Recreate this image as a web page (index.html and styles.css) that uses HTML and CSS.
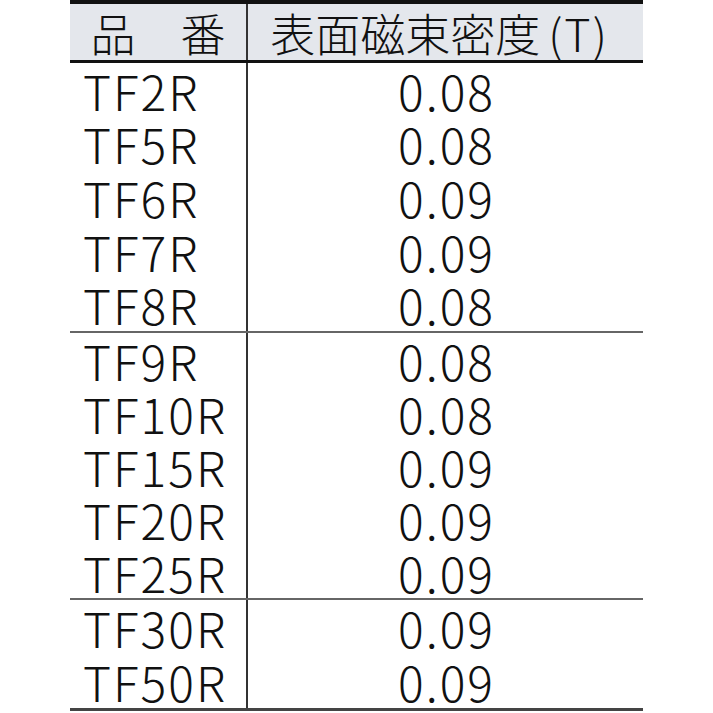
FILE: index.html
```html
<!DOCTYPE html>
<html lang="ja">
<head>
<meta charset="utf-8">
<link rel="stylesheet" href="styles.css">
</head>
<body>
<div class="table">
  <div class="head">
    <div class="hcell c1">品　番</div>
    <div class="hcell c2">表面磁束密度<span class="paren">(T)</span></div>
  </div>
  <div class="group g1">
    <div class="row"><div class="name">TF2R</div><div class="val">0.08</div></div>
    <div class="row"><div class="name">TF5R</div><div class="val">0.08</div></div>
    <div class="row"><div class="name">TF6R</div><div class="val">0.09</div></div>
    <div class="row"><div class="name">TF7R</div><div class="val">0.09</div></div>
    <div class="row"><div class="name">TF8R</div><div class="val">0.08</div></div>
  </div>
  <div class="group g2">
    <div class="row"><div class="name">TF9R</div><div class="val">0.08</div></div>
    <div class="row"><div class="name">TF10R</div><div class="val">0.08</div></div>
    <div class="row"><div class="name">TF15R</div><div class="val">0.09</div></div>
    <div class="row"><div class="name">TF20R</div><div class="val">0.09</div></div>
    <div class="row"><div class="name">TF25R</div><div class="val">0.09</div></div>
  </div>
  <div class="group g3">
    <div class="row"><div class="name">TF30R</div><div class="val">0.09</div></div>
    <div class="row"><div class="name">TF50R</div><div class="val">0.09</div></div>
  </div>
</div>
</body>
</html>
```
FILE: styles.css
```css
html, body {
  margin: 0;
  padding: 0;
  background: #ffffff;
}
body {
  font-family: "Noto Sans CJK JP", "Noto Sans", sans-serif;
  font-weight: 300;
  color: #111111;
}
.table {
  margin-left: 70px;
  width: 573px;
  display: flex;
  flex-direction: column;
}
.head {
  display: grid;
  grid-template-columns: 178px 1fr;
  height: 56px;
  background: #e4e7ec;
  border-top: 4px solid #111111;
  border-bottom: 3px solid #111111;
}
.hcell {
  display: flex;
  align-items: center;
  justify-content: center;
  font-size: 45px;
  line-height: 1;
}
.hcell.c1 {
  border-right: 2px solid #333333;
}
.hcell.c2 {
  padding-right: 12px;
}
.paren {
  margin-left: 8px;
  letter-spacing: 2px;
}
.group {
  display: flex;
  flex-direction: column;
  border-bottom: 2px solid #666666;
}
.group.g3 {
  border-bottom: 3px solid #444444;
}
.row {
  display: grid;
  grid-template-columns: 178px 1fr;
}
.g1 .row { height: 53.6px; }
.g2 .row { height: 53.1px; }
.g3 .row { height: 54px; }
.name {
  border-right: 2px solid #333333;
  padding-left: 13px;
  display: flex;
  align-items: center;
  font-size: 48px;
  line-height: 1;
  letter-spacing: 2px;
}
.val {
  display: flex;
  align-items: center;
  justify-content: center;
  padding-left: 2px;
  font-size: 48px;
  line-height: 1;
  letter-spacing: 2px;
}
```
